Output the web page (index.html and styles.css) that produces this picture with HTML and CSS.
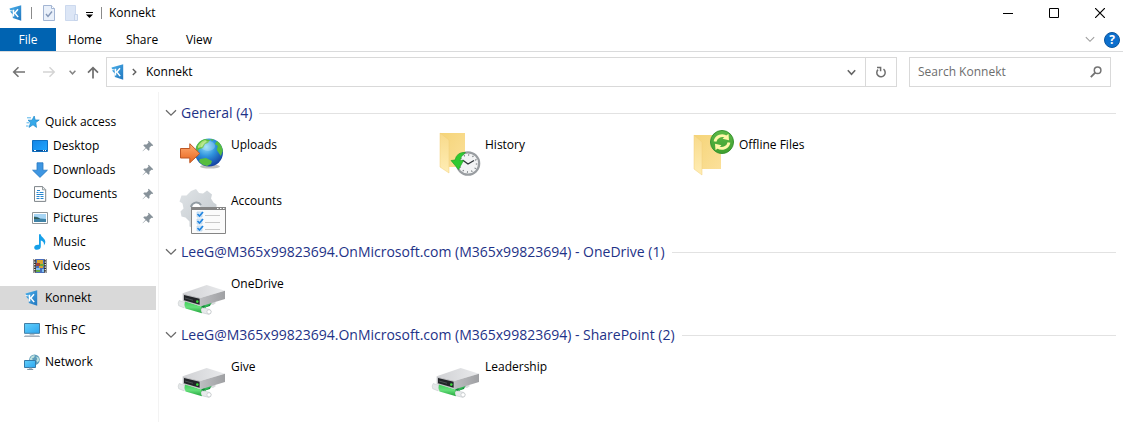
FILE: index.html
```html
<!DOCTYPE html>
<html lang="en">
<head>
<meta charset="utf-8">
<title>Konnekt</title>
<link rel="stylesheet" href="styles.css">
</head>
<body>
<svg class="defs" width="0" height="0" aria-hidden="true">
  <defs>
    <linearGradient id="brand" x1="0" y1="0" x2="1" y2="1"><stop offset="0" stop-color="#4bb0ea"/><stop offset="1" stop-color="#2277bf"/></linearGradient>
    <linearGradient id="screen" x1="0" y1="0" x2="1" y2="1"><stop offset="0" stop-color="#62d0fb"/><stop offset="1" stop-color="#2da5ef"/></linearGradient>
    <linearGradient id="desk" x1="0" y1="0" x2="1" y2="1"><stop offset="0" stop-color="#1285e6"/><stop offset="1" stop-color="#21a6ff"/></linearGradient>
    <linearGradient id="folderBack" x1="0" y1="0" x2="1" y2="1"><stop offset="0" stop-color="#f5d478"/><stop offset="1" stop-color="#fbe09a"/></linearGradient>
    <linearGradient id="folderFront" x1="0" y1="0" x2="0" y2="1"><stop offset="0" stop-color="#f8da8b"/><stop offset="1" stop-color="#ffedb4"/></linearGradient>
    <linearGradient id="driveTop" x1="0" y1="0" x2="1" y2="0"><stop offset="0" stop-color="#d0d1d4"/><stop offset="1" stop-color="#e9eaec"/></linearGradient>
    <linearGradient id="driveSide" x1="0" y1="0" x2="1" y2="0"><stop offset="0" stop-color="#bcbdc0"/><stop offset="1" stop-color="#9fa0a3"/></linearGradient>
    <linearGradient id="pipe" x1="0" y1="0" x2="0" y2="1"><stop offset="0" stop-color="#3fce5a"/><stop offset=".5" stop-color="#65e07a"/><stop offset="1" stop-color="#22a43c"/></linearGradient>
    <radialGradient id="ocean" cx=".4" cy=".3" r=".75"><stop offset="0" stop-color="#8fdcfa"/><stop offset=".45" stop-color="#2f93dd"/><stop offset="1" stop-color="#123a9c"/></radialGradient>
    <linearGradient id="orange" x1="0" y1="0" x2="0" y2="1"><stop offset="0" stop-color="#ffac72"/><stop offset="1" stop-color="#e8641c"/></linearGradient>
    <linearGradient id="sync" x1="0" y1="0" x2="0" y2="1"><stop offset="0" stop-color="#5cb947"/><stop offset="1" stop-color="#3fa02f"/></linearGradient>
    <linearGradient id="gearFill" x1="0" y1="0" x2="1" y2="1"><stop offset="0" stop-color="#dfe3e6"/><stop offset="1" stop-color="#c2c8cd"/></linearGradient>
  </defs>
  <symbol id="i-konnekt" viewBox="0 0 16 16"><path d="M1.500 3.400 13.200.2v15.600L4.800 13V9.400L2.800 7.600z" fill="url(#brand)"/><path d="M5.500 4.800v6.600M10 4.200 6.800 7.900l3.400 4.200" fill="none" stroke="#fff" stroke-width="1.500"/><path d="m1.500 5.300 3.300.7" stroke="#fff" stroke-width=".8"/></symbol>
  <symbol id="i-star" viewBox="0 0 16 16"><path d="m10.200 2 1 4h4l-3.400 2.600.7 4.800-3.500-2.600-4 2.600 1.600-4.700L4 6.200h4z" fill="#36a9e9" stroke="#1d88cc" stroke-width=".7"/><path d="M3 3.800h4M2 12h2.600M2.500 8.800h3" stroke="#56b4ea"/></symbol>
  <symbol id="i-desktop" viewBox="0 0 16 16"><path d="M.5 2.500h15v11H.5z" fill="url(#desk)" stroke="#0e6fc0"/><path d="M1 12.500h14" stroke="#0a4f96"/><path d="M2 12.500h2m7 0h1m1 0h1" stroke="#fff"/></symbol>
  <symbol id="i-down" viewBox="0 0 16 16"><path d="M5 .8h6v7.400h4.400L8 15.400.6 8.200H5z" fill="#3e96e2" stroke="#2778c2" stroke-width=".8"/></symbol>
  <symbol id="i-doc" viewBox="0 0 16 16"><path d="M2.500.6h8.200l3 3v11.800H2.500z" fill="#fff" stroke="#7e8589"/><path d="M10.500.8v3h3" fill="#e8ecee" stroke="#7e8589" stroke-width=".8"/><path d="M5 4.500h3M4.500 6.500h2m1 0h4M4.500 8.500h7M4.500 10.500h3m1 0h3m-7 2h3m1 0h3" stroke="#2786cf" fill="none"/></symbol>
  <symbol id="i-picture" viewBox="0 0 16 16"><path d="M.5 2.500h15v11H.5z" fill="#fff" stroke="#909699"/><path d="M2 4h12v8H2z" fill="#a7d5f4"/><path d="M2 6.500q4 0 6 2l6 .5v3H2z" fill="#4083a7"/><path d="M2 7q5 .3 6 2H2z" fill="#315c57"/></symbol>
  <symbol id="i-music" viewBox="0 0 16 16"><path d="M7 .2h1.700c.3 3 4.600 4 4.600 7.600 0 1.600-.6 2.600-1.400 3.600.5-3.200-1.200-4.400-3.100-4.900v6c0 2.200-1.800 3.300-3.800 3.300-1.700 0-2.800-.9-2.800-2.300 0-1.700 2-3.200 4.800-2.700z" fill="#16a0e9"/></symbol>
  <symbol id="i-video" viewBox="0 0 16 16"><path d="M1.500 1h13v14h-13z" fill="#313131"/><path d="M4 1h8v14H4z" fill="#496ebd"/><path d="M5 2h6v4H5zm2 6h4v2H7z" fill="#d9a52c"/><path d="M4 5h4v3H4z" fill="#a04637"/><path d="M8 6h4v2H8zM4 12h4v2H4z" fill="#64a843"/><path d="M4 10h4v2H4zm6 1h2v3h-2z" fill="#7fbff0"/><path d="M2.700 1v14M13.300 1v14" stroke="#eee" stroke-width="1.300" stroke-dasharray="1.300 1.200"/></symbol>
  <symbol id="i-pc" viewBox="0 0 16 16"><path d="M.5 1.500h15v9.800H.5z" fill="url(#screen)" stroke="#427ea5"/><path d="M5.600 12h4.800v1.400H5.600z" fill="#b5c1c9"/><path d="M1 13.400h14l1 1.600H0z" fill="#8996a3"/><path d="M1 14h14" stroke="#dbe3e8" stroke-width=".7"/></symbol>
  <symbol id="i-network" viewBox="0 0 16 16"><circle cx="10.500" cy="5.700" r="5.300" fill="#5d9dbb"/><path d="M6 4.500q2-4 5-3l-1 2-2 1 1 2H6zm6-2 2.500 1 .8 3-2 2-1-2 1-1.500z" fill="#bfe1de"/><path d="M.5 6.500h11v7H.5z" fill="url(#screen)" stroke="#347aa8"/><path d="M5 13.700h3v1H5z" fill="#8ea7b7"/><path d="M3.200 15.400h6" stroke="#71889a"/></symbol>
  <symbol id="i-pin" viewBox="0 0 12 12"><path d="m6.700.8 4.500 4.400-.8.8-1-.3-2 2 .1 2.400-.9.700L4 8.200.8 11.300.6 11l3-3.300-2.300-2.300.8-.9 2.500.1 2-2L6 1.500z" fill="#87929a"/></symbol>
  <symbol id="i-chevron" viewBox="0 0 12 8"><path d="m1 1.200 5 5 5-5" fill="none" stroke="currentColor" stroke-width="1.300"/></symbol>
  <symbol id="i-drive" viewBox="0 0 48 50">
    <path d="M36 37 39 35l-2-2-6 3z" fill="#d9dcdd"/>
    <path d="m20 42 13-4 2-5-8 3z" fill="#128b38"/>
    <path d="m27 35 8-3v3l-7 5z" fill="#31b555"/>
    <path d="m2.200 32.500 6 2-1 5.400-5.500-2.200q-1.300-2.700.5-5.200" fill="#e5e8e9" stroke="#bfc4c6" stroke-width=".5"/>
    <path d="m25 39.800 7.600 1.500q2.500 1.700 1 4.200l-1.800.9-8-2z" fill="#e7eaeb" stroke="#bac0c2" stroke-width=".5"/>
    <circle cx="32" cy="43.800" r="2.100" fill="#fff" stroke="#bac0c2" stroke-width=".6"/>
    <path d="m8 33 17 5.700q-2 3 0 6.600L8.500 40.500q-1.700-3.500-.5-7.500" fill="url(#pipe)"/>
    <path d="m5.700 25.300 24-8.300 18.300 5.700-24 7z" fill="url(#driveTop)"/>
    <path d="m24 29.700 24-7V31l-24 7.200z" fill="url(#driveSide)"/>
    <path d="m5.700 25.300 18.300 4.400v8.500L5.700 33z" fill="#c0c1c4"/>
    <path d="m7 27 15.600 3.700v6L7 32.200z" fill="#222528"/>
    <path d="m8 29.500 8 2.200v1L8 30.500z" fill="#4b5053"/>
    <circle cx="20.300" cy="33.600" r="1.300" fill="#3bdc3e"/>
  </symbol>
</svg>

<header class="titlebar">
  <svg class="ico title-logo"><use href="#i-konnekt"/></svg>
  <span class="bar"></span>
  <button class="quick" aria-label="Properties"><svg width="12" height="16" viewBox="0 0 12 16"><path d="M.5.5h8l3 3v12H.5z" fill="#e9f0fa" stroke="#a3b5d3"/><path d="M8.500.5v3h3" fill="#fff" stroke="#a3b5d3"/><path d="m3 9 2 2.500 4-5" fill="none" stroke="#8497b8" stroke-width="1.400"/></svg></button>
  <button class="quick" aria-label="New folder"><svg width="13" height="16" viewBox="0 0 13 16"><path d="M.5.5h10v15H.5z" fill="#dce6f6" stroke="#ccd9ee"/><path d="M9.500 9.500h3v6h-3z" fill="#e5edf9" stroke="#c5d3ea"/></svg></button>
  <button class="quick more" aria-label="Customize Quick Access Toolbar"><svg width="7" height="6" viewBox="0 0 7 6"><path d="M0 0h7v1H0zM0 2.500h7L3.500 6z" fill="#000"/></svg></button>
  <span class="bar"></span>
  <h1 class="title">Konnekt</h1>
  <div class="window-buttons">
    <button aria-label="Minimize"><svg width="10" height="10"><path d="M0 5.500h10" stroke="#000"/></svg></button>
    <button aria-label="Maximize"><svg width="10" height="10"><path d="M.5.5h9v9h-9z" fill="none" stroke="#000"/></svg></button>
    <button aria-label="Close"><svg width="10" height="10"><path d="m0 0 10 10M10 0 0 10" stroke="#000" stroke-width="1.200"/></svg></button>
  </div>
</header>

<nav class="ribbon" aria-label="Ribbon">
  <button class="tab file">File</button>
  <button class="tab">Home</button>
  <button class="tab">Share</button>
  <button class="tab">View</button>
  <div class="ribbon-end">
    <button class="expand" aria-label="Expand the Ribbon"><svg width="10" height="7"><use href="#i-chevron"/></svg></button>
    <button class="help" aria-label="Help">?</button>
  </div>
</nav>

<div class="navbar">
  <button class="nav back" aria-label="Back"><svg width="14" height="12" viewBox="0 0 14 12"><path d="M13 6H2M6.500 1.200 1.700 6l4.800 4.800" fill="none" stroke="#737373" stroke-width="1.600"/></svg></button>
  <button class="nav forward" aria-label="Forward"><svg width="14" height="12" viewBox="0 0 14 12"><path d="M1 6h11M7.500 1.200 12.300 6l-4.800 4.800" fill="none" stroke="#d4d4d4" stroke-width="1.400"/></svg></button>
  <button class="nav recent" aria-label="Recent locations"><svg width="7" height="5" viewBox="0 0 7 5"><path d="m.6.800 2.900 3 2.900-3" fill="none" stroke="#858585" stroke-width="1.500"/></svg></button>
  <button class="nav up" aria-label="Up"><svg width="12" height="13" viewBox="0 0 12 13"><path d="M6 12.500V2M1 6.700l5-5 5 5" fill="none" stroke="#6e6e6e" stroke-width="1.700"/></svg></button>
  <div class="address">
    <svg class="ico"><use href="#i-konnekt"/></svg>
    <svg class="crumb-arrow" width="5" height="8" viewBox="0 0 5 8"><path d="m.8 1 3 3-3 3" fill="none" stroke="#606060" stroke-width="1.400"/></svg>
    <button class="crumb">Konnekt</button>
    <button class="drop" aria-label="Previous locations"><svg width="9" height="7" viewBox="0 0 9 7"><path d="m.8 1.300 3.700 4 3.700-4" fill="none" stroke="#666" stroke-width="1.600"/></svg></button>
    <button class="refresh" aria-label="Refresh"><svg width="12" height="12" viewBox="0 0 12 12"><path d="M8.500 3.200A4.200 4.200 0 1 1 3 3.600" fill="none" stroke="#6e6e6e" stroke-width="1.500"/><path d="M2 1.500h3.600v3.800" fill="none" stroke="#6e6e6e" stroke-width="1.500"/></svg></button>
  </div>
  <div class="search">
    <input type="text" placeholder="Search Konnekt" aria-label="Search Konnekt">
    <svg width="12" height="12" viewBox="0 0 12 12"><circle cx="7.600" cy="4.300" r="3.300" fill="none" stroke="#737373" stroke-width="1.500"/><path d="M5.200 6.700.8 11.100" stroke="#737373" stroke-width="1.900"/></svg>
  </div>
</div>

<div class="body">
  <nav class="sidebar" aria-label="Navigation pane">
    <a class="row" href="#"><svg class="ico"><use href="#i-star"/></svg>Quick access</a>
    <a class="row sub" href="#"><svg class="ico"><use href="#i-desktop"/></svg>Desktop<svg class="pin"><use href="#i-pin"/></svg></a>
    <a class="row sub" href="#"><svg class="ico"><use href="#i-down"/></svg>Downloads<svg class="pin"><use href="#i-pin"/></svg></a>
    <a class="row sub" href="#"><svg class="ico"><use href="#i-doc"/></svg>Documents<svg class="pin"><use href="#i-pin"/></svg></a>
    <a class="row sub" href="#"><svg class="ico"><use href="#i-picture"/></svg>Pictures<svg class="pin"><use href="#i-pin"/></svg></a>
    <a class="row sub" href="#"><svg class="ico"><use href="#i-music"/></svg>Music</a>
    <a class="row sub" href="#"><svg class="ico"><use href="#i-video"/></svg>Videos</a>
    <a class="row root selected" href="#"><svg class="ico"><use href="#i-konnekt"/></svg>Konnekt</a>
    <a class="row root" href="#"><svg class="ico"><use href="#i-pc"/></svg>This PC</a>
    <a class="row root" href="#"><svg class="ico"><use href="#i-network"/></svg>Network</a>
  </nav>

  <main class="content">
    <section class="group">
      <h2><button class="group-head"><svg width="12" height="8"><use href="#i-chevron"/></svg>General (4)</button></h2>
      <div class="items">
        <a class="item" href="#">
          <svg class="big" viewBox="0 0 48 50">
            <ellipse cx="33" cy="37.500" rx="10" ry="2" fill="#000" opacity=".25"/>
            <circle cx="32" cy="23.500" r="14" fill="url(#ocean)"/>
            <path d="M19 18q3-7 9-8l5 1-2 3-3 1-2 4-4 1-2 4zM40 12q5 3 5.800 10l-2 5-2-3-2-3 1-4-3-2zM23 30l6-1 6 3-1 3-4 2q-6-1-8-5zM33 10l4 .5-2 1.500z" fill="#57bd3f"/>
            <path d="M21 17q3-5 7-6l2 1-3 3-2 3-4 1z" fill="#a9e277"/>
            <ellipse cx="31" cy="17" rx="7" ry="5" fill="#fff" opacity=".22"/>
            <path d="M3.500 19.500h9.300v-4.800l10 9.800-10 9.300V29H3.500z" fill="url(#orange)" stroke="#bd5724"/>
          </svg><span>Uploads</span></a>
        <a class="item" href="#">
          <svg class="big" viewBox="0 0 48 50">
            <path d="M9 4h25v34H9z" fill="url(#folderBack)"/>
            <path d="m9 4 9 7v33L9 38z" fill="url(#folderFront)" stroke="#f0cf79" stroke-width=".5"/>
            <circle cx="37" cy="34.500" r="11.200" fill="#f2f3f4" stroke="#999da1" stroke-width="2.200"/>
            <circle cx="37" cy="34.500" r="8.600" fill="none" stroke="#6e7478" stroke-width="1.500" stroke-dasharray="1 3.500"/>
            <path d="m31.500 31 5.500 4 6-3.500" fill="none" stroke="#30363a" stroke-width="1.400"/>
            <path d="M34.500 23.500q-8.500-1-10.500 7.500l-4 .5 7.500 9 5-9h-3.500q.5-4 5.500-8z" fill="#2fca31" stroke="#159c1f" stroke-width=".6"/>
          </svg><span>History</span></a>
        <a class="item" href="#">
          <svg class="big" viewBox="0 0 48 50">
            <path d="M9 6h23l4 3v31H9z" fill="url(#folderBack)"/>
            <path d="m9 6 8 7v33l-8-6z" fill="url(#folderFront)" stroke="#f0cf79" stroke-width=".5"/>
            <circle cx="37" cy="13" r="11.500" fill="url(#sync)" stroke="#389331"/>
            <path d="M30 12.500a7.200 7.200 0 0 1 11.500-4.300M44 13.500a7.200 7.200 0 0 1-11.500 4.300" fill="none" stroke="#fff7a8" stroke-width="2.800"/>
            <path d="m43.500 4.700.5 6.500-6.500-1.500zM30.500 21.300l-.5-6.500 6.500 1.500z" fill="#fff7a8"/>
          </svg><span>Offline Files</span></a>
        <a class="item" href="#">
          <svg class="big" viewBox="0 0 48 50">
            <path fill-rule="evenodd" d="m14 6 5-2 3 4 4 .5 4-3 5 4-1 4 2.500 4 3 2v7l-4 2-1 6-6 6-6-1-5 4-5-2v-5l-4-4-4-1-1-5 3-3-1-5-3-2 2-6 5 0 3-3zm5 12a4.500 4.500 0 1 0 .1 9 4.500 4.500 0 0 0-.1-9" fill="url(#gearFill)"/>
            <path d="M14 22a5.500 5.500 0 0 1 10-2" fill="none" stroke="#929ca3" stroke-width="2"/>
            <path d="M14.500 22.500h34v26h-34z" fill="#fbfbfb" stroke="#858585"/>
            <path d="M14 22h35v3H14z" fill="#858585"/>
            <path d="M40 23.500h1.500m1.500 0h1.500m1.500 0h1.500" stroke="#fff"/>
            <path d="M20 27h5v5h-5zm0 7h5v5h-5zm0 7h5v5h-5z" fill="#d8ebfa" stroke="#a8cbea" stroke-width=".6"/>
            <path d="m20.500 29 2 2 3.500-4m-5.500 9 2 2 3.500-4m-5.500 9 2 2 3.500-4" fill="none" stroke="#2385e0" stroke-width="1.700"/>
            <path d="M28 30.500h15m-15 7h15m-15 7h15" stroke="#c9c9c9"/>
          </svg><span>Accounts</span></a>
      </div>
    </section>
    <section class="group">
      <h2><button class="group-head"><svg width="12" height="8"><use href="#i-chevron"/></svg>LeeG@M365x99823694.OnMicrosoft.com (M365x99823694) - OneDrive (1)</button></h2>
      <div class="items">
        <a class="item" href="#"><svg class="big"><use href="#i-drive"/></svg><span>OneDrive</span></a>
      </div>
    </section>
    <section class="group">
      <h2><button class="group-head"><svg width="12" height="8"><use href="#i-chevron"/></svg>LeeG@M365x99823694.OnMicrosoft.com (M365x99823694) - SharePoint (2)</button></h2>
      <div class="items">
        <a class="item" href="#"><svg class="big"><use href="#i-drive"/></svg><span>Give</span></a>
        <a class="item" href="#"><svg class="big"><use href="#i-drive"/></svg><span>Leadership</span></a>
      </div>
    </section>
  </main>
</div>
</body>
</html>
```
FILE: styles.css
```css
* { box-sizing: border-box; }
body {
  margin: 0;
  min-height: 100vh;
  display: flex;
  flex-direction: column;
  background: #fff;
  color: #000;
  font: 12px/16px "Open Sans", "Noto Sans", sans-serif;
}
button {
  display: flex;
  align-items: center;
  justify-content: center;
  margin: 0;
  padding: 0;
  border: 0;
  background: none;
  color: inherit;
  font: inherit;
}
a { color: inherit; text-decoration: none; }
h1, h2 { margin: 0; font-weight: 400; }
svg { display: block; flex: none; }
.defs { position: absolute; }
.ico { width: 16px; height: 16px; }

.titlebar { display: flex; align-items: center; height: 28px; padding-left: 8px; padding-bottom: 2px; }
.title-logo { margin-right: 7px; }
.bar { width: 1px; height: 12px; background: #8a8a8a; }
.quick { margin-left: 11px; }
.quick + .quick { margin-left: 10px; }
.quick + .quick.more { margin: 3px 8px 0 8px; }
.title { margin-left: 7px; font-size: 12px; }
.window-buttons { display: flex; margin-left: auto; }
.window-buttons button { width: 46px; height: 26px; }

.ribbon { display: flex; height: 24px; border-bottom: 1px solid #dadbdc; }
.tab { width: 56px; }
.tab + .tab { margin-left: 1px; }
.tab.file { background: #0063b1; color: #fff; }
.ribbon-end { display: flex; align-items: center; gap: 9px; margin-left: auto; padding-right: 3px; }
.expand { color: #9c9c9c; }
.help { width: 16px; height: 16px; border: 1px solid #0a559e; border-radius: 50%; background: #0c6fcd; color: #fff; font-weight: 700; }

.navbar { display: flex; align-items: center; padding: 5px 12px; }
.nav.forward { margin-left: 16px; }
.nav.recent { margin-left: 13px; }
.nav.up { margin: 0 7px 0 11px; }
.address { display: flex; flex: 1; align-items: center; height: 30px; padding-left: 3px; border: 1px solid #d9d9d9; }
.crumb-arrow { margin: 0 9px 0 6px; }
.drop { width: 28px; height: 28px; margin-left: auto; }
.refresh { width: 31px; height: 28px; border-left: 1px solid #d9d9d9; }
.search { display: flex; flex: 0 0 202px; align-items: center; height: 30px; margin-left: 12px; padding: 0 8px; border: 1px solid #d9d9d9; }
.search input { flex: 1; min-width: 0; padding: 0; border: 0; outline: 0; background: none; font: inherit; }
.search input::placeholder { color: #6d6d6d; opacity: 1; }

.body { display: flex; flex: 1; }
.sidebar { flex: none; width: 159px; padding: 18px 2px 0 0; border-right: 1px solid #f3f3f3; }
.row { display: flex; align-items: center; gap: 5px; height: 24px; padding-left: 24px; }
.row.sub { padding-left: 32px; }
.row.root { margin-top: 8px; }
.selected { background: #d9d9d9; }
.pin { width: 12px; height: 12px; margin: 0 2px 0 auto; }

.content { flex: 1; min-width: 0; padding: 9px 7px 0 6px; }
.group { margin-bottom: 3px; }
.group h2 { display: flex; align-items: center; gap: 7px; height: 24px; }
.group h2::after { content: ""; flex: 1; height: 1px; background: #e2e2e2; }
.group-head { gap: 4px; color: #1e3287; font-size: 14px; line-height: 20px; }
.group-head svg { color: #6a6a6a; }
.items { display: grid; grid-template-columns: repeat(auto-fill, 254px); padding-left: 12px; }
.item { display: flex; gap: 6px; height: 56px; padding-top: 4px; }
.item span { margin-top: 8px; }
.big { width: 48px; height: 50px; overflow: visible; }
```
